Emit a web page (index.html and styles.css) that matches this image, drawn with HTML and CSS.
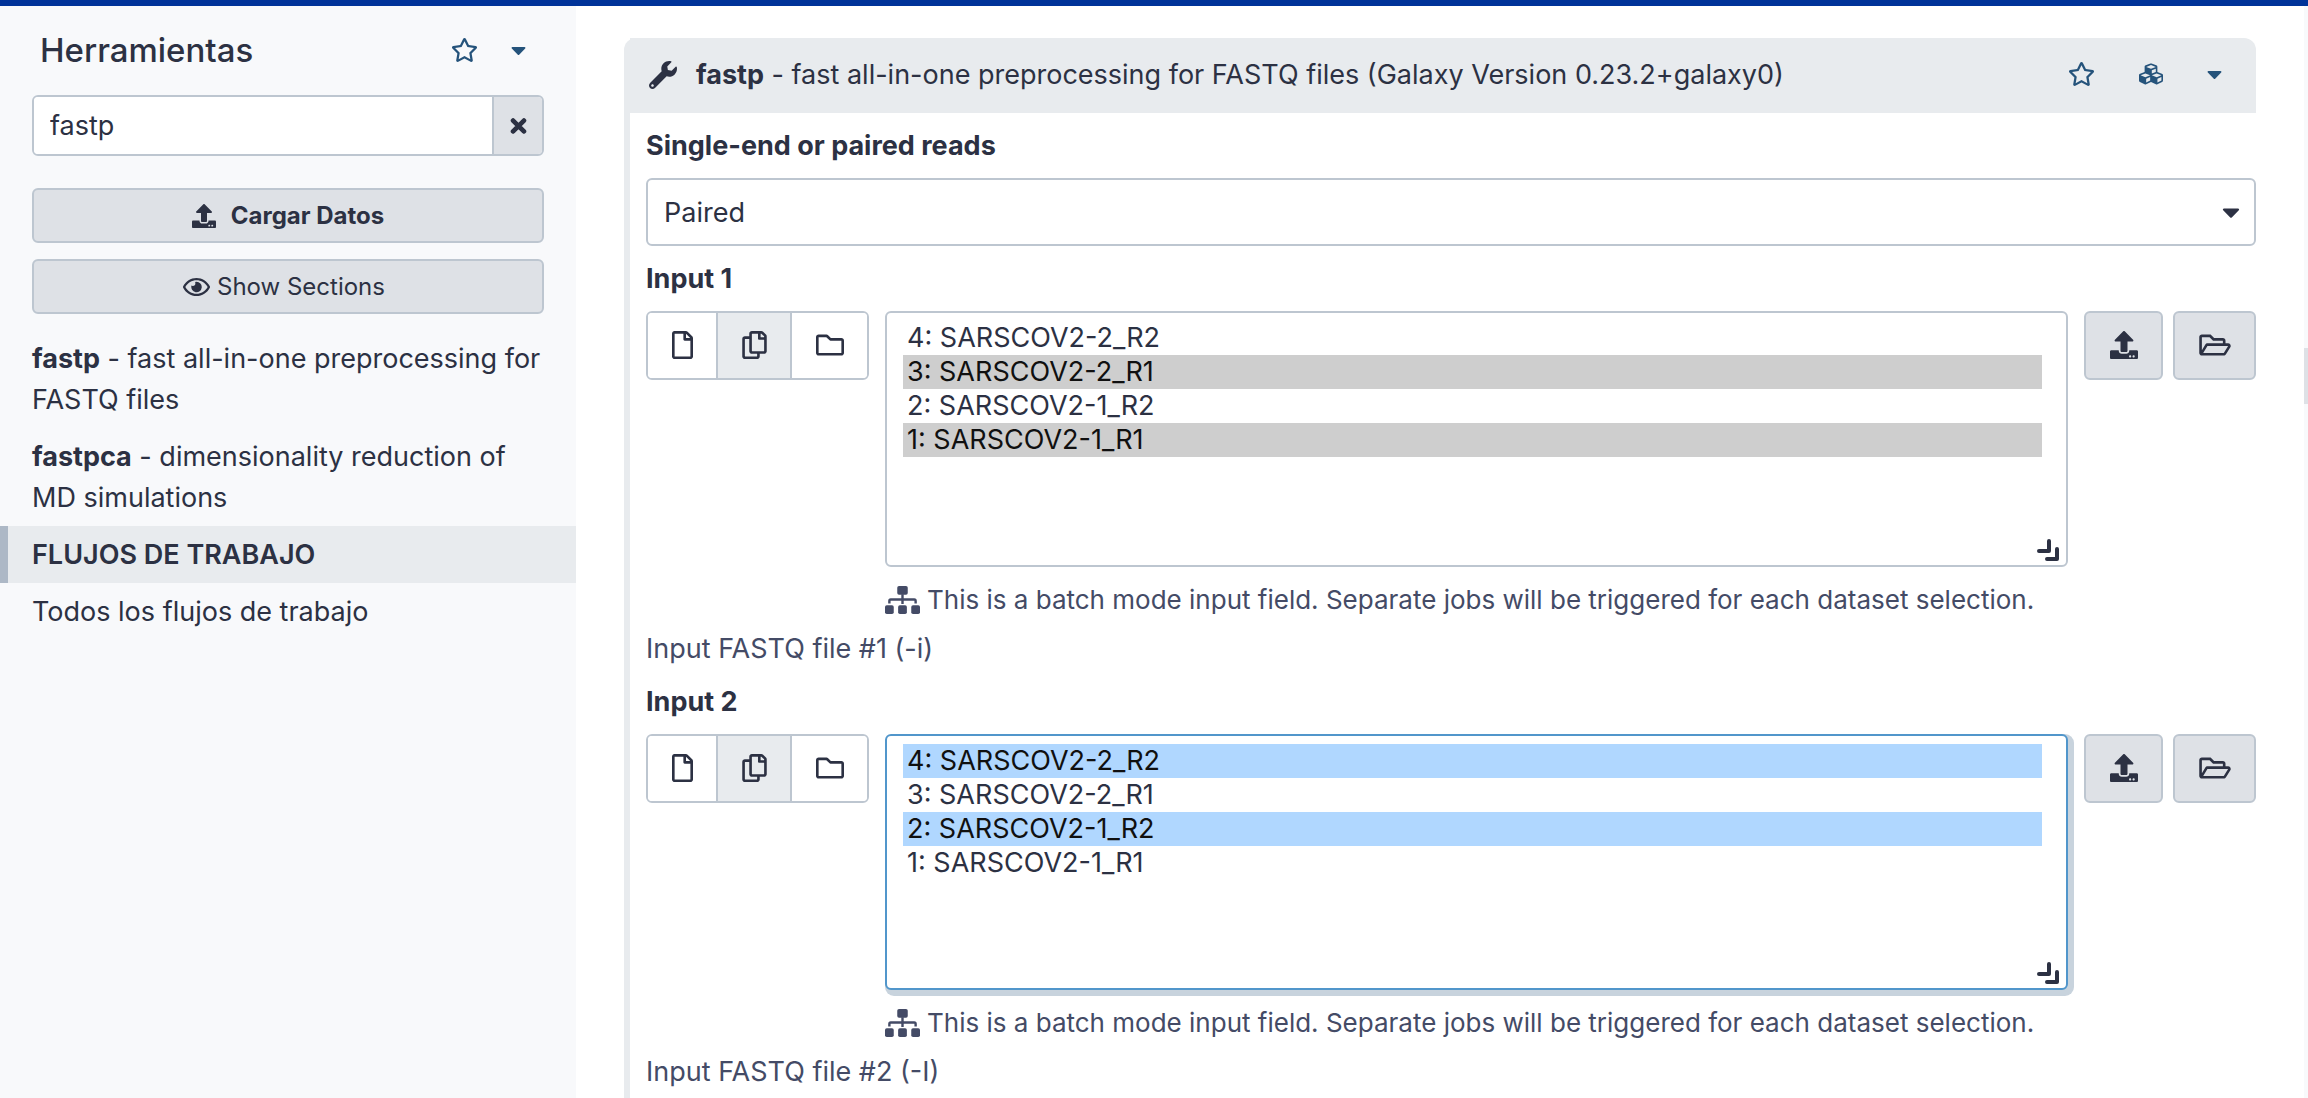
FILE: index.html
```html
<!DOCTYPE html>
<html lang="es">
<head>
<meta charset="utf-8">
<meta name="viewport" content="width=device-width, initial-scale=1">
<title>Galaxy - fastp</title>
<link rel="stylesheet" href="styles.css">
</head>
<body>
<svg class="sprite" aria-hidden="true">
  <symbol id="star" viewBox="0 0 576 512"><path d="M528.1 171.5L382 150.2 316.7 17.8c-11.7-23.6-45.6-23.9-57.4 0L194 150.2 47.9 171.5c-26.2 3.8-36.7 36.1-17.7 54.6l105.7 103-25 145.5c-4.5 26.3 23.2 46 46.4 33.7L288 439.6l130.7 68.7c23.2 12.2 50.9-7.4 46.4-33.7l-25-145.5 105.7-103c19-18.5 8.5-50.8-17.7-54.6zM388.6 312.3l23.7 138.4L288 385.4l-124.3 65.3 23.7-138.4-100.6-98 139-20.2 62.2-126 62.2 126 139 20.2-100.6 98z"/></symbol>
  <symbol id="caret" viewBox="0 0 320 512"><path d="M31.3 192h257.3c17.8 0 26.7 21.5 14.1 34.1L174.1 354.8c-7.8 7.8-20.5 7.8-28.3 0L17.2 226.1C4.6 213.5 13.5 192 31.3 192z"/></symbol>
  <symbol id="times" viewBox="0 0 352 512"><path d="M60 140l232 232M292 140L60 372" fill="none" stroke="currentColor" stroke-width="100" stroke-linecap="round"/></symbol>
  <symbol id="upload" viewBox="0 0 512 512"><path d="M296 384h-80c-13.3 0-24-10.7-24-24V192h-87.7c-17.8 0-26.7-21.5-14.1-34.1L242.3 5.7c7.5-7.5 19.8-7.5 27.3 0l152.2 152.2c12.6 12.6 3.7 34.1-14.1 34.1H320v168c0 13.3-10.7 24-24 24zm216-8v112c0 13.3-10.7 24-24 24H24c-13.3 0-24-10.7-24-24V376c0-13.3 10.7-24 24-24h136v8c0 30.9 25.1 56 56 56h80c30.9 0 56-25.1 56-56v-8h136c13.3 0 24 10.7 24 24zm-124 88c0-11-9-20-20-20s-20 9-20 20 9 20 20 20 20-9 20-20zm64 0c0-11-9-20-20-20s-20 9-20 20 9 20 20 20 20-9 20-20z"/></symbol>
  <symbol id="eye" viewBox="0 0 576 512"><path d="M288 144a110.94 110.94 0 0 0-31.24 5 55.4 55.4 0 0 1 7.24 27 56 56 0 0 1-56 56 55.4 55.4 0 0 1-27-7.24A111.71 111.71 0 1 0 288 144zm284.52 97.4C518.29 135.59 410.93 64 288 64S57.68 135.64 3.48 241.41a32.35 32.35 0 0 0 0 29.19C57.71 376.41 165.07 448 288 448s230.32-71.64 284.52-177.41a32.35 32.35 0 0 0 0-29.19zM288 400c-98.65 0-189.09-55-237.93-144C98.91 167 189.34 112 288 112s189.09 55 237.93 144C477.1 345 386.66 400 288 400z"/></symbol>
  <symbol id="wrench" viewBox="0 0 512 512"><path d="M507.73 109.1c-2.24-9.03-13.54-12.09-20.12-5.51l-74.36 74.36-67.88-11.31-11.31-67.88 74.36-74.36c6.62-6.62 3.43-17.9-5.66-20.16-47.38-11.74-99.55.91-136.58 37.93-39.64 39.64-50.55 97.1-34.05 147.2L18.74 402.76c-24.99 24.99-24.99 65.51 0 90.5 24.99 24.99 65.51 24.99 90.5 0l213.21-213.21c50.12 16.71 107.47 5.68 147.37-34.22 37.07-37.07 49.7-89.32 37.91-136.73zM64 472c-13.25 0-24-10.75-24-24 0-13.26 10.75-24 24-24s24 10.74 24 24c0 13.25-10.75 24-24 24z"/></symbol>
  <symbol id="file" viewBox="0 0 384 512"><path d="M369.9 97.9L286 14C277 5 264.8-.1 252.1-.1H48C21.5 0 0 21.5 0 48v416c0 26.5 21.5 48 48 48h288c26.5 0 48-21.5 48-48V131.9c0-12.7-5.1-25-14.1-34zM332.1 128H256V51.9l76.1 76.1zM48 464V48h160v104c0 13.3 10.7 24 24 24h104v288H48z"/></symbol>
  <symbol id="copy" viewBox="0 0 448 512"><path d="M433.941 65.941l-51.882-51.882A48 48 0 0 0 348.118 0H176c-26.51 0-48 21.49-48 48v48H48c-26.51 0-48 21.49-48 48v320c0 26.51 21.49 48 48 48h224c26.51 0 48-21.49 48-48v-48h80c26.51 0 48-21.49 48-48V99.882a48 48 0 0 0-14.059-33.941zM266 464H54a6 6 0 0 1-6-6V150a6 6 0 0 1 6-6h74v224c0 26.51 21.49 48 48 48h96v42a6 6 0 0 1-6 6zm128-96H182a6 6 0 0 1-6-6V54a6 6 0 0 1 6-6h106v88c0 13.255 10.745 24 24 24h88v202a6 6 0 0 1-6 6zm6-256h-64V48h9.632c1.591 0 3.117.632 4.243 1.757l48.368 48.368a6 6 0 0 1 1.757 4.243V112z"/></symbol>
  <symbol id="folder" viewBox="0 0 512 512"><path d="M464 128H272l-54.63-54.63c-6-6-14.14-9.37-22.63-9.37H48C21.49 64 0 85.49 0 112v288c0 26.51 21.49 48 48 48h416c26.51 0 48-21.49 48-48V176c0-26.51-21.49-48-48-48zm0 272H48V112h140.12l54.63 54.63c6 6 14.14 9.37 22.63 9.37H464v224z"/></symbol>
  <symbol id="folder-open" viewBox="0 0 576 512"><path d="M527.9 224H480v-48c0-26.5-21.5-48-48-48H272l-64-64H48C21.5 64 0 85.5 0 112v288c0 26.5 21.5 48 48 48h400c16.5 0 31.9-8.5 40.7-22.6l79.9-128c20-31.9-3-73.4-40.7-73.4zM48 118c0-3.3 2.7-6 6-6h134.1l64 64H426c3.3 0 6 2.7 6 6v42H152c-16.8 0-32.4 8.8-41.1 23.2L48 351.4zm400 282H72l77.2-128H528z"/></symbol>
  <symbol id="sitemap" viewBox="0 0 640 512">
    <rect x="224" y="0" width="192" height="160" rx="32"/><rect x="0" y="352" width="160" height="160" rx="32"/><rect x="240" y="352" width="160" height="160" rx="32"/><rect x="480" y="352" width="160" height="160" rx="32"/>
    <path d="M80 320v-48q0-24 24-24h432q24 0 24 24v48M320 150v180" fill="none" stroke="currentColor" stroke-width="44"/>
  </symbol>
  <symbol id="cubes" viewBox="0 0 512 512"><path d="M488.6 250.2L392 214V105.5c0-15-9.3-28.4-23.4-33.7l-100-37.5c-8.1-3.1-17.1-3.1-25.3 0l-100 37.5c-14.1 5.3-23.4 18.7-23.4 33.7V214l-96.6 36.2C9.3 255.5 0 268.9 0 283.9V394c0 13.6 7.7 26.1 19.9 32.2l100 50c10.1 5.1 22.1 5.1 32.2 0l103.9-52 103.9 52c10.1 5.1 22.1 5.1 32.2 0l100-50c12.2-6.1 19.9-18.6 19.9-32.2V283.9c0-15-9.3-28.4-23.4-33.7zM358 214.8l-85 31.9v-68.2l85-37v73.3zM154 104.1l102-38.2 102 38.2v.6l-102 41.4-102-41.4v-.6zm84 291.1l-85 42.5v-79.1l85-38.8v75.4zm0-112l-102 41.4-102-41.4v-.6l102-38.2 102 38.2v.6zm240 112l-85 42.5v-79.1l85-38.8v75.4zm0-112l-102 41.4-102-41.4v-.6l102-38.2 102 38.2v.6z"/></symbol>
  <symbol id="grip" viewBox="0 0 22 22"><path d="M2 12h10V2M10 20h10V10" fill="none" stroke="currentColor" stroke-width="4" stroke-linecap="round" stroke-linejoin="round"/></symbol>
</svg>

<header class="masthead"></header>
<div class="layout">
  <aside class="tools">
    <div class="tools-head">
      <h1>Herramientas</h1>
      <button class="link-btn" type="button" aria-label="Favoritos"><svg class="icon wide"><use href="#star"/></svg></button>
      <button class="link-btn" type="button" aria-label="Opciones"><svg class="icon caret"><use href="#caret"/></svg></button>
    </div>
    <div class="search">
      <input type="text" value="fastp" aria-label="Buscar herramientas">
      <button type="button" aria-label="Borrar"><svg class="icon times"><use href="#times"/></svg></button>
    </div>
    <button class="btn block upload-btn" type="button"><svg class="icon"><use href="#upload"/></svg>Cargar Datos</button>
    <button class="btn block sections-btn" type="button"><svg class="icon wide"><use href="#eye"/></svg>Show Sections</button>
    <nav class="tool-list">
      <a href="#fastp"><b>fastp</b> - fast all-in-one preprocessing for FASTQ files</a>
      <a href="#fastpca"><b>fastpca</b> - dimensionality reduction of MD simulations</a>
      <h2>FLUJOS DE TRABAJO</h2>
      <a href="#workflows">Todos los flujos de trabajo</a>
    </nav>
  </aside>

  <main>
    <form class="card">
      <div class="card-head">
        <svg class="icon lg"><use href="#wrench"/></svg>
        <div class="card-title"><b>fastp</b> - fast all-in-one preprocessing for FASTQ files (Galaxy Version 0.23.2+galaxy0)</div>
        <button class="link-btn" type="button" aria-label="Favorite"><svg class="icon wide"><use href="#star"/></svg></button>
        <button class="link-btn" type="button" aria-label="Versions"><svg class="icon"><use href="#cubes"/></svg></button>
        <button class="link-btn" type="button" aria-label="Options"><svg class="icon caret"><use href="#caret"/></svg></button>
      </div>
      <div class="card-body">
        <label for="mode">Single-end or paired reads</label>
        <div class="select-wrap">
          <select id="mode"><option>Paired</option><option>Single-end</option></select>
          <svg class="icon caret lg"><use href="#caret"/></svg>
        </div>

        <label for="in1">Input 1</label>
        <div class="data-row">
          <div class="group">
            <button type="button" aria-label="Single dataset"><svg class="icon lg file"><use href="#file"/></svg></button>
            <button type="button" class="active" aria-label="Multiple datasets"><svg class="icon lg copy"><use href="#copy"/></svg></button>
            <button type="button" aria-label="Dataset collection"><svg class="icon lg"><use href="#folder"/></svg></button>
          </div>
          <div class="list-col">
            <div class="list-wrap">
              <select id="in1" multiple>
                <option>4: SARSCOV2-2_R2</option>
                <option selected>3: SARSCOV2-2_R1</option>
                <option>2: SARSCOV2-1_R2</option>
                <option selected>1: SARSCOV2-1_R1</option>
              </select>
              <svg class="grip"><use href="#grip"/></svg>
            </div>
            <p class="note"><svg class="icon lg sitemap"><use href="#sitemap"/></svg>This is a batch mode input field. Separate jobs will be triggered for each dataset selection.</p>
          </div>
          <div class="actions">
            <button class="btn" type="button" aria-label="Upload"><svg class="icon lg"><use href="#upload"/></svg></button>
            <button class="btn" type="button" aria-label="Browse"><svg class="icon lg wide"><use href="#folder-open"/></svg></button>
          </div>
        </div>
        <p class="help">Input FASTQ file #1 (-i)</p>

        <label for="in2">Input 2</label>
        <div class="data-row">
          <div class="group">
            <button type="button" aria-label="Single dataset"><svg class="icon lg file"><use href="#file"/></svg></button>
            <button type="button" class="active" aria-label="Multiple datasets"><svg class="icon lg copy"><use href="#copy"/></svg></button>
            <button type="button" aria-label="Dataset collection"><svg class="icon lg"><use href="#folder"/></svg></button>
          </div>
          <div class="list-col">
            <div class="list-wrap">
              <select id="in2" class="focused" multiple>
                <option selected>4: SARSCOV2-2_R2</option>
                <option>3: SARSCOV2-2_R1</option>
                <option selected>2: SARSCOV2-1_R2</option>
                <option>1: SARSCOV2-1_R1</option>
              </select>
              <svg class="grip"><use href="#grip"/></svg>
            </div>
            <p class="note"><svg class="icon lg sitemap"><use href="#sitemap"/></svg>This is a batch mode input field. Separate jobs will be triggered for each dataset selection.</p>
          </div>
          <div class="actions">
            <button class="btn" type="button" aria-label="Upload"><svg class="icon lg"><use href="#upload"/></svg></button>
            <button class="btn" type="button" aria-label="Browse"><svg class="icon lg wide"><use href="#folder-open"/></svg></button>
          </div>
        </div>
        <p class="help">Input FASTQ file #2 (-I)</p>
      </div>
    </form>
  </main>
  <div class="history-edge"><div class="handle"></div></div>
</div>
</body>
</html>
```
FILE: styles.css
```css
:root {
  --text: #2c3143;
  --muted: #444b66;
  --border: #bdc6d0;
  --panel: #f8f9fb;
  --head: #e8ebee;
  --button: #dee1e6;
  --link: #25537b;
}

* { box-sizing: border-box; }

body {
  margin: 0;
  min-height: 100vh;
  display: flex;
  flex-direction: column;
  background: #fff;
  color: var(--text);
  font: 27px/41px Inter, "Liberation Sans", sans-serif;
}

h1, h2, p { margin: 0; }
b { font-weight: 700; }

button, input, select {
  margin: 0;
  color: inherit;
  font: inherit;
}

button { padding: 0; cursor: pointer; }

.sprite { position: absolute; width: 0; height: 0; }

.icon {
  width: 24px;
  height: 24px;
  flex: none;
  display: block;
  fill: currentColor;
}
.icon.wide { width: 27px; }
.icon.caret { width: 15px; }
.icon.times { width: 17px; }
.icon.lg { width: 28px; height: 28px; }
.icon.lg.wide { width: 32px; }
.icon.lg.caret { width: 18px; }
.icon.lg.file { width: 21px; }
.icon.lg.copy { width: 25px; }
.icon.lg.sitemap { width: 35px; }

.masthead { height: 6px; background: #039; }

.layout { flex: 1; display: flex; }

/* Tool panel */
.tools {
  width: 576px;
  flex: none;
  background: var(--panel);
}

.tools-head {
  display: flex;
  align-items: center;
  padding: 24px 50px 24px 40px;
}
.tools-head h1 {
  flex: 1;
  font-size: 33px;
  font-weight: 500;
  line-height: 41px;
}

.link-btn {
  padding-bottom: 2px;
  border: 0;
  background: none;
  color: var(--link);
}
.tools-head .link-btn + .link-btn { margin-left: 33px; }

.search {
  display: flex;
  height: 61px;
  margin: 0 32px 32px;
  border: 2px solid var(--border);
  border-radius: 6px;
  overflow: hidden;
}
.search input {
  flex: 1;
  min-width: 0;
  padding: 0 16px;
  border: 0;
  background: #fff;
}
.search button {
  width: 50px;
  display: flex;
  align-items: center;
  justify-content: center;
  border: 0;
  border-left: 2px solid var(--border);
  background: var(--button);
}

.btn {
  display: flex;
  align-items: center;
  justify-content: center;
  border: 2px solid var(--border);
  border-radius: 6px;
  background: var(--button);
}
.btn.block {
  width: calc(100% - 64px);
  height: 55px;
  margin: 0 32px 16px;
  font-size: 24px;
}
.upload-btn { gap: 15px; font-weight: 700; }
.sections-btn { gap: 7px; padding-right: 8px; }

.tool-list a {
  display: block;
  padding: 8px 32px;
  color: inherit;
  text-decoration: none;
}
.tool-list h2 {
  padding: 8px 24px;
  border-left: 8px solid #adb8c6;
  background: var(--head);
  font-size: 27px;
  font-weight: 600;
}

/* Tool form */
main {
  flex: 1;
  min-width: 0;
  display: flex;
  flex-direction: column;
  padding: 32px 48px 0;
}

.card {
  flex: 1;
  border-left: 6px solid var(--head);
  border-radius: 12px 12px 0 0;
}
.card-head {
  display: flex;
  align-items: center;
  padding: 16px 34px 18px 19px;
  border-radius: 0 12px 0 0;
  background: var(--head);
}
.card-title { flex: 1; margin-left: 19px; }
.card-head .link-btn + .link-btn { margin-left: 44px; }

.card-body { padding: 12px 0 0 16px; }
.card-body label {
  display: block;
  margin-bottom: 12px;
  font-weight: 700;
}

.select-wrap { display: grid; align-items: center; margin-bottom: 12px; }
.select-wrap > * { grid-area: 1 / 1; }
.select-wrap select {
  appearance: none;
  width: 100%;
  height: 68px;
  padding: 0 16px;
  border: 2px solid var(--border);
  border-radius: 6px;
  background: #fff;
}
.select-wrap .icon {
  justify-self: end;
  margin-right: 16px;
  pointer-events: none;
}

.data-row { display: flex; align-items: flex-start; gap: 16px; }

.group {
  display: flex;
  width: 223px;
  height: 69px;
  flex: none;
  border: 2px solid var(--border);
  border-radius: 6px;
  overflow: hidden;
}
.group button {
  flex: 1 1 auto;
  display: flex;
  align-items: center;
  justify-content: center;
  padding: 0 23px 2px;
  border: 0;
  background: #fff;
}
.group button + button { border-left: 2px solid var(--border); }
.group .active { background: var(--head); }

.list-col { flex: 1; min-width: 0; }
.list-wrap { position: relative; }
.list-wrap select {
  display: block;
  width: 100%;
  height: 256px;
  padding: 8px 24px 8px 16px;
  border: 2px solid var(--border);
  border-radius: 6px;
  background: #fff;
  outline: 0;
}
.list-wrap option {
  height: 34px;
  padding: 0 4px;
  line-height: 34px;
}
.list-wrap .focused {
  border-color: #5196cb;
  box-shadow: 3px 3px 0 3px #c8d3dd;
}
.focused option:checked { background: linear-gradient(#b0d7ff, #b0d7ff); }
.grip {
  position: absolute;
  right: 9px;
  bottom: 6px;
  width: 22px;
  height: 22px;
  color: var(--text);
  pointer-events: none;
}

.note {
  display: flex;
  align-items: center;
  gap: 7px;
  margin-top: 12px;
  color: var(--muted);
  font-size: 26px;
}
.help { margin: 8px 0 12px; color: var(--muted); }
.help:last-child { margin-bottom: 0; }

.actions { display: grid; grid-template-columns: 79px 83px; gap: 10px; }
.actions .btn { height: 69px; padding: 0 0 2px; }

/* Collapsed edge of the history panel */
.history-edge { width: 4px; flex: none; padding-top: 342px; background: var(--panel); }
.handle { height: 56px; background: var(--button); }
```
